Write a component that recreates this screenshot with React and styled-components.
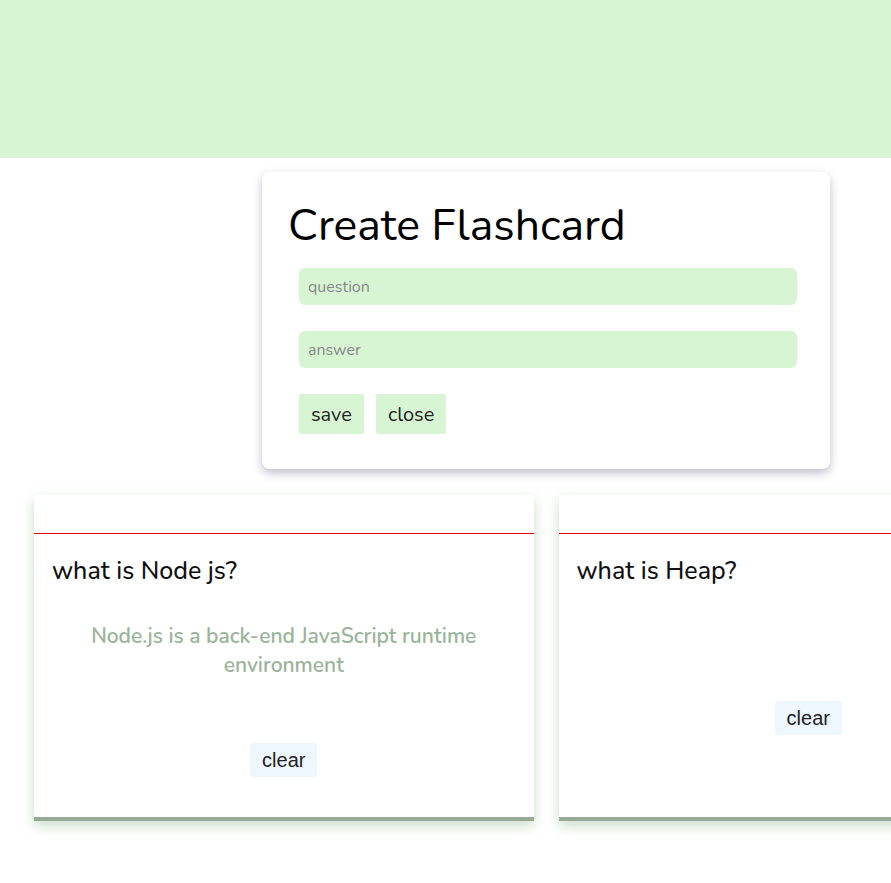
import React from 'react'
import styled, { createGlobalStyle } from 'styled-components'

const GlobalStyle = createGlobalStyle`
    body {
        margin: 0;
        background: #fff;
        font-family: "Nunito", "Lato", "Noto Sans", sans-serif;
        color: #111;
    }
`

const cards = [
    { id: 1, question: 'what is Node js?', answer: 'Node.js is a back-end JavaScript runtime environment' },
    { id: 2, question: 'what is Heap?', answer: '' }
]

const App = () => {
    return (
        <Page>
            <GlobalStyle />
            <Banner />
            <FormCard>
                <Title>Create Flashcard</Title>
                <Form>
                    <Input placeholder='question' />
                    <Input placeholder='answer' />
                    <Actions>
                        <FormButton>save</FormButton>
                        <FormButton>close</FormButton>
                    </Actions>
                </Form>
            </FormCard>
            <CardRow>
                {cards.map(card => (
                    <Card key={card.id}>
                        <CardTop />
                        <Question>{card.question}</Question>
                        <Answer>{card.answer}</Answer>
                        <ClearButton>clear</ClearButton>
                    </Card>
                ))}
            </CardRow>
        </Page>
    )
}

export default App

const Page = styled.div`
    width: 1092px;
    padding-bottom: 40px;
`

const Banner = styled.header`
    height: 158px;
    background-color: #d7f5d3;
`

const FormCard = styled.section`
    width: 568px;
    height: 297px;
    box-sizing: border-box;
    margin: 14px auto 0;
    padding: 24px 26px;
    background: #fff;
    border-radius: 8px;
    box-shadow: 0 4px 10px rgba(70, 70, 100, 0.35);
`

const Title = styled.h1`
    margin: 0;
    font-size: 44.5px;
    font-weight: 400;
    line-height: 60px;
    color: #000;
`

const Form = styled.div`
    display: flex;
    flex-direction: column;
    gap: 26px;
    width: 498px;
    margin: 12px 0 0 11px;
`

const Input = styled.input`
    height: 37px;
    box-sizing: border-box;
    border: none;
    border-radius: 6px;
    padding: 0 9px;
    background: #d7f5d3;
    font-family: "Nunito", "Lato", "Noto Sans", sans-serif;
    font-size: 16px;
    outline: none;

    &::placeholder {
        color: #888;
    }
`

const Actions = styled.div`
    display: flex;
    gap: 12px;
`

const FormButton = styled.button`
    height: 40px;
    padding: 0 12px;
    border: none;
    border-radius: 2px;
    background: #d7f5d3;
    color: #222;
    font-family: "Nunito", "Lato", "Noto Sans", sans-serif;
    font-size: 20px;
`

const CardRow = styled.div`
    display: flex;
    gap: 25px;
    padding: 26px 34px 0;
`

const Card = styled.article`
    width: 500px;
    height: 326px;
    box-sizing: border-box;
    display: flex;
    flex-direction: column;
    background: #fff;
    border-bottom: 4px solid #97a897;
    box-shadow: 0 5px 12px rgba(110, 160, 110, 0.35);
`

const CardTop = styled.div`
    height: 38px;
    border-bottom: 1px solid #e00;
    flex-shrink: 0;
`

const Question = styled.h3`
    margin: 22px 0 0;
    padding: 0 18px;
    font-size: 25px;
    font-weight: 500;
    line-height: 30px;
    color: #111;
`

const Answer = styled.p`
    margin: 36px 0 0;
    min-height: 16px;
    padding: 0 40px;
    text-align: center;
    font-size: 21px;
    font-weight: 600;
    line-height: 29px;
    color: #9ab49a;
`

const ClearButton = styled.button`
    align-self: center;
    margin-top: 63px;
    height: 34px;
    padding: 0 12px;
    border: none;
    border-radius: 3px;
    background: #eef6ff;
    color: #222;
    font-family: "Liberation Sans", Arial, sans-serif;
    font-size: 20px;
`
